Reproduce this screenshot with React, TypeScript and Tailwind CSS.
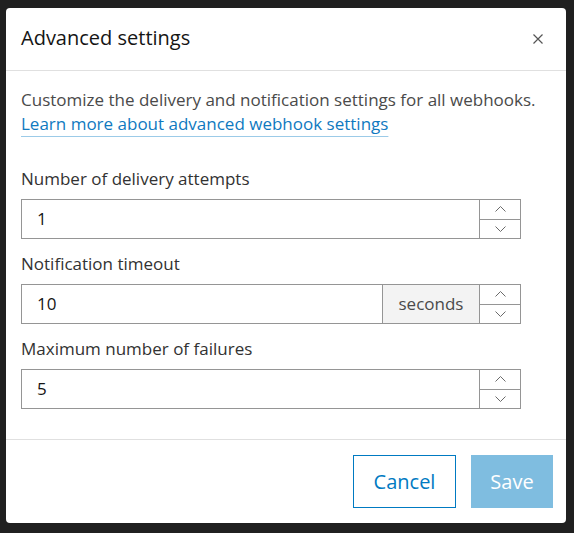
import { ReactNode } from "react";

const font = { fontFamily: '"Open Sans", "Noto Sans", sans-serif' };

function Chevron({ up }: { up?: boolean }) {
  return (
    <svg width="11" height="6" viewBox="0 0 11 6" fill="none" className="text-[#6a6a6a]">
      <polyline
        points={up ? "0.5,5.5 5.5,0.5 10.5,5.5" : "0.5,0.5 5.5,5.5 10.5,0.5"}
        stroke="currentColor"
        strokeWidth="1"
      />
    </svg>
  );
}

function NumberField({ label, value, suffix }: { label: string; value: string; suffix?: ReactNode }) {
  return (
    <div className="flex flex-col">
      <label className="text-[17px] leading-6 text-[#323232] mb-2">{label}</label>
      <div className="flex h-10 w-[500px] border border-[#959595]">
        <div className="flex-1 flex items-center pl-[15px] text-[17px] text-[#151515]">{value}</div>
        {suffix && (
          <div className="w-[97px] flex items-center justify-center bg-[#f3f3f3] border-l border-[#959595] text-[17px] text-[#4a4a4a]">
            {suffix}
          </div>
        )}
        <div className="w-[41px] flex flex-col border-l border-[#959595]">
          <div className="flex-1 flex items-center justify-center">
            <Chevron up />
          </div>
          <div className="flex-1 flex items-center justify-center border-t border-[#959595]">
            <Chevron />
          </div>
        </div>
      </div>
    </div>
  );
}

export default function App() {
  return (
    <div className="min-h-[533px] bg-[#202020] pt-2 pl-[6px]" style={font}>
      <div className="w-[560px] h-[515px] bg-white rounded-[4px] flex flex-col">
        {/* header */}
        <div className="h-[63px] shrink-0 flex items-center justify-between pl-[15px] pr-[23px] border-b border-[#e0e0e0]">
          <h2 className="text-[20px] text-[#151515] pb-[2px]">Advanced settings</h2>
          <svg width="10" height="10" viewBox="0 0 10 10" className="text-[#555]">
            <path d="M0.5 0.5 L9.5 9.5 M9.5 0.5 L0.5 9.5" stroke="currentColor" strokeWidth="1.2" />
          </svg>
        </div>

        {/* body */}
        <div className="flex-1 px-[15px] pt-[17px]">
          <p className="text-[17px] leading-6 text-[#4a4a4a]">
            Customize the delivery and notification settings for all webhooks.
          </p>
          <a className="text-[17px] leading-6 text-[#0f79bf] underline decoration-[#9ccbe8] underline-offset-[6px]">
            Learn more about advanced webhook settings
          </a>
          <div className="mt-[31px] flex flex-col gap-[13px]">
            <NumberField label="Number of delivery attempts" value="1" />
            <NumberField label="Notification timeout" value="10" suffix="seconds" />
            <NumberField label="Maximum number of failures" value="5" />
          </div>
        </div>

        {/* footer */}
        <div className="h-[84px] shrink-0 border-t border-[#e0e0e0] flex justify-end items-start gap-[15px] pt-[15px] pr-[13px]">
          <button className="w-[103px] h-[53px] border border-[#007ac2] text-[#007ac2] text-[20px]">Cancel</button>
          <button className="w-[82px] h-[53px] bg-[#7fbde0] text-white text-[20px]">Save</button>
        </div>
      </div>
    </div>
  );
}
